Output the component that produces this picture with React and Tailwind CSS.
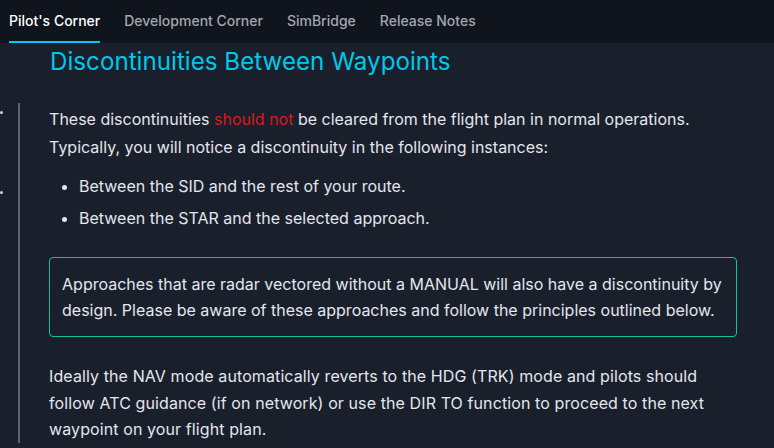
const TABS = ["Pilot's Corner", 'Development Corner', 'SimBridge', 'Release Notes']

export default function App() {
  return (
    <div className="w-[774px] h-[448px] overflow-hidden bg-[#1a1f2c] text-[#e4e6ee]" style={{ fontFamily: 'Inter, "Noto Sans", sans-serif' }}>
      {/* tabs */}
      <div className="h-[43px] bg-[#10141d] flex items-stretch pl-[9px] gap-[24px]">
        {TABS.map((t, i) => (
          <div key={t} className={`flex items-center text-[14px] font-medium ${i === 0 ? 'text-white border-b-2 border-[#00c8f0]' : 'text-[#a3a7b0] border-b-2 border-transparent'}`}>
            {t}
          </div>
        ))}
      </div>

      <div className="relative">
        {/* cut-off toc marks */}
        <div className="absolute left-0 top-[68px] w-[3px] h-[3px] bg-[#d0d3dc] rounded-full" />
        <div className="absolute left-0 top-[148px] w-[3px] h-[3px] bg-[#d0d3dc] rounded-full" />

        <h1 className="pl-[50px] pt-[3px] text-[24.2px] leading-[32px] text-[#00c8e8]">
          Discontinuities Between Waypoints
        </h1>

        <div className="flex mt-[25px]">
          <div className="ml-[18px] w-[4px] bg-[#5d6272] self-stretch" />
          <div className="pl-[29px] pr-[37px] text-[16px]">
            <p className="leading-[28px] pt-[2px]">
              These discontinuities <span className="text-[#d91a1a]">should not</span> be cleared from the flight plan in normal operations. Typically, you will notice a discontinuity in the following instances:
            </p>
            <ul className="mt-[11px] pl-[30px] list-disc leading-[28px] flex flex-col gap-[4px]">
              <li>Between the SID and the rest of your route.</li>
              <li>Between the STAR and the selected approach.</li>
            </ul>
            <div className="mt-[25px] border border-[#12c29f] rounded-[4px] px-[12px] py-[13px] leading-[26px]">
              Approaches that are radar vectored without a MANUAL will also have a discontinuity by design. Please be aware of these approaches and follow the principles outlined below.
            </div>
            <p className="mt-[26px] leading-[26.7px] tracking-[0.1px] whitespace-nowrap">
              Ideally the NAV mode automatically reverts to the HDG (TRK) mode and pilots should<br />
              follow ATC guidance (if on network) or use the DIR TO function to proceed to the next<br />
              waypoint on your flight plan.
            </p>
          </div>
        </div>
      </div>
    </div>
  )
}
